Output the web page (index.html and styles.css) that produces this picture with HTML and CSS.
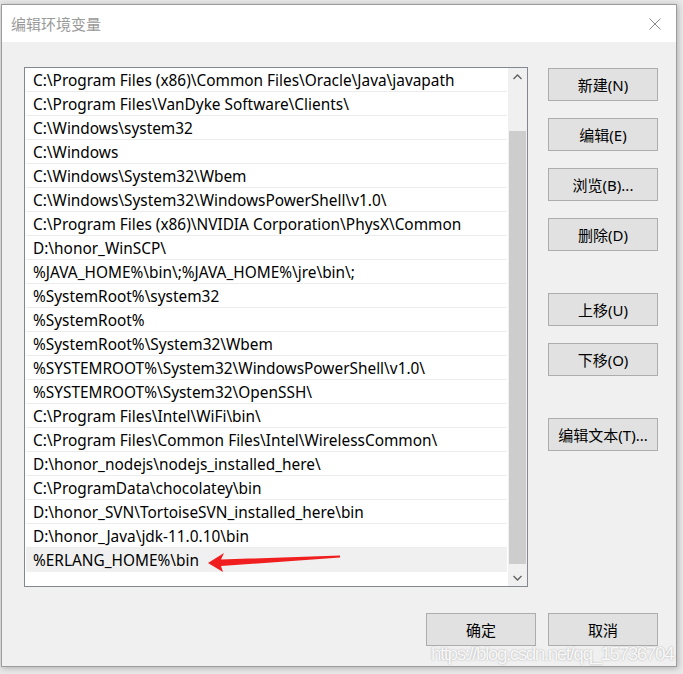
FILE: index.html
```html
<!DOCTYPE html>
<html>
<head>
    <meta charset="UTF-8">
    <meta name="viewport" content="width=device-width, initial-scale=1.0">
    <title>编辑环境变量</title>
    <link rel="stylesheet" href="styles.css">
</head>
<body>
    <div class="dialog">
        <div class="titlebar">
            <span class="title">编辑环境变量</span>
            <svg class="close" width="12" height="12" viewBox="0 0 12 12">
                <path d="M0.5 0.5L11.5 11.5M11.5 0.5L0.5 11.5" stroke="#8a8a8a" stroke-width="1" fill="none"/>
            </svg>
        </div>
        <div class="content">
            <div class="main">
                <div class="listbox">
                    <ul class="paths">
                        <li>C:\Program Files (x86)\Common Files\Oracle\Java\javapath</li>
                        <li>C:\Program Files\VanDyke Software\Clients\</li>
                        <li>C:\Windows\system32</li>
                        <li>C:\Windows</li>
                        <li>C:\Windows\System32\Wbem</li>
                        <li>C:\Windows\System32\WindowsPowerShell\v1.0\</li>
                        <li>C:\Program Files (x86)\NVIDIA Corporation\PhysX\Common</li>
                        <li>D:\honor_WinSCP\</li>
                        <li>%JAVA_HOME%\bin\;%JAVA_HOME%\jre\bin\;</li>
                        <li>%SystemRoot%\system32</li>
                        <li>%SystemRoot%</li>
                        <li>%SystemRoot%\System32\Wbem</li>
                        <li>%SYSTEMROOT%\System32\WindowsPowerShell\v1.0\</li>
                        <li>%SYSTEMROOT%\System32\OpenSSH\</li>
                        <li>C:\Program Files\Intel\WiFi\bin\</li>
                        <li>C:\Program Files\Common Files\Intel\WirelessCommon\</li>
                        <li>D:\honor_nodejs\nodejs_installed_here\</li>
                        <li>C:\ProgramData\chocolatey\bin</li>
                        <li>D:\honor_SVN\TortoiseSVN_installed_here\bin</li>
                        <li>D:\honor_Java\jdk-11.0.10\bin</li>
                        <li class="selected">%ERLANG_HOME%\bin</li>
                    </ul>
                    <div class="scrollbar">
                        <span class="scroll-btn">
                            <svg width="9" height="6" viewBox="0 0 9 6"><path d="M0.5 5L4.5 1L8.5 5" stroke="#606060" stroke-width="1.3" fill="none"/></svg>
                        </span>
                        <div class="track"><div class="thumb"></div></div>
                        <span class="scroll-btn">
                            <svg width="9" height="6" viewBox="0 0 9 6"><path d="M0.5 1L4.5 5L8.5 1" stroke="#606060" stroke-width="1.3" fill="none"/></svg>
                        </span>
                    </div>
                </div>
                <div class="side">
                    <button>新建(N)</button>
                    <button>编辑(E)</button>
                    <button>浏览(B)...</button>
                    <button>删除(D)</button>
                    <button class="group">上移(U)</button>
                    <button>下移(O)</button>
                    <button class="group">编辑文本(T)...</button>
                </div>
            </div>
            <div class="footer">
                <button>确定</button>
                <button>取消</button>
            </div>
        </div>
    </div>

    <svg class="pointer" width="683" height="674" viewBox="0 0 683 674">
        <polygon points="208,563 224,553 221,559.5 340,555.5 340,557.5 221,566 223,572" fill="#f01e1e"/>
    </svg>
    <div class="watermark">https://blog.csdn.net/qq_15736704</div>
</body>
</html>
```

FILE: styles.css
```css
* { box-sizing: border-box; }
body { margin: 0; width: 683px; height: 674px; overflow: hidden; background-color: #e8e8e8; font-family: "Noto Sans", "Noto Sans CJK SC", sans-serif; font-size: 15px; color: #000; position: relative; }

.dialog { margin: 4px 0 0 1px; width: 676px; height: 663px; border: 1px solid #9c9c9c; background-color: #f0f0f0; box-shadow: 1px 1px 6px rgba(0, 0, 0, 0.25); display: flex; flex-direction: column; }
.titlebar { height: 37px; background-color: #fff; display: flex; align-items: center; justify-content: space-between; padding: 0 15px 0 9px; }
.title { color: #9a9a9a; font-size: 15px; }

.content { padding: 25px 18px 0 22px; }
.main { display: flex; gap: 20px; }

.listbox { width: 504px; height: 520px; border: 1px solid #828790; background-color: #fff; display: flex; }
.paths { list-style: none; margin: 0; padding: 0; flex: 1; }
.paths li { height: 24px; line-height: 20px; padding-top: 3px; margin: 0 1px; padding-left: 7px; font-size: 15.4px; border-bottom: 1px solid #ececec; white-space: nowrap; overflow: hidden; }
.paths li.selected { background-color: #f0f0f0; border-bottom-color: #f0f0f0; }

.scrollbar { width: 19px; background-color: #f0f0f0; display: flex; flex-direction: column; }
.scroll-btn { height: 17px; display: flex; align-items: center; justify-content: center; }
.track { flex: 1; display: flex; flex-direction: column; padding: 46px 1px 5px; }
.thumb { flex: 1; background-color: #cdcdcd; }

.side { width: 110px; padding-top: 1px; display: flex; flex-direction: column; gap: 17px; }
button { height: 33px; width: 110px; border: 1px solid #adadad; background-color: #e1e1e1; font-family: "Noto Sans", "Noto Sans CJK SC", sans-serif; font-size: 15px; color: #000; padding: 0; }
.side .group { margin-top: 25px; }

.footer { display: flex; justify-content: flex-end; gap: 12px; margin-top: 26px; }

.pointer { position: absolute; left: 0; top: 0; pointer-events: none; }
.watermark { position: absolute; left: 431px; top: 643px; font-family: "Liberation Sans", Arial, sans-serif; font-size: 19px; letter-spacing: -1.5px; color: rgba(255, 255, 255, 0.9); text-shadow: 0 0 2px rgba(120, 120, 120, 0.6); white-space: nowrap; }
```
